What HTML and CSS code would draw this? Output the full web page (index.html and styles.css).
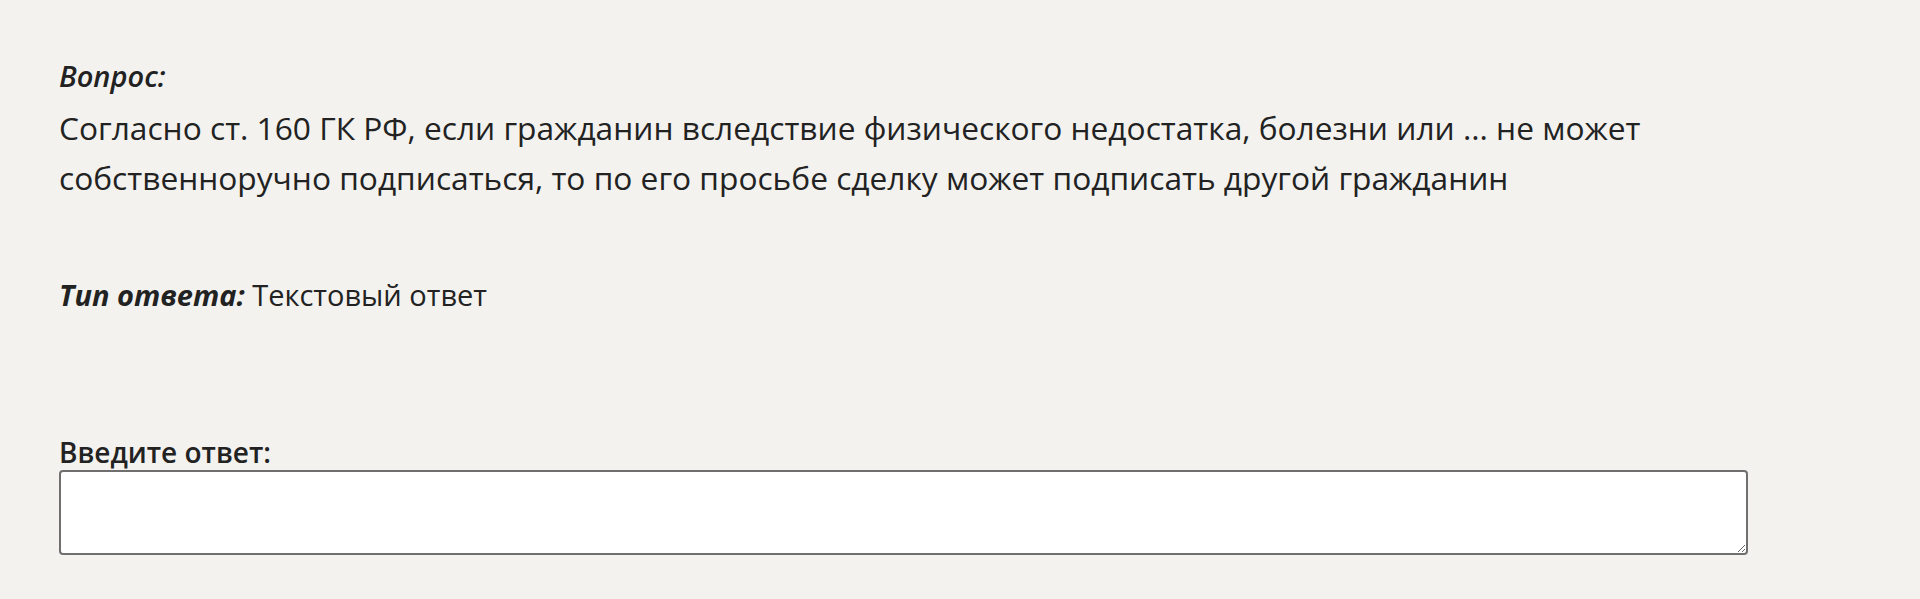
FILE: index.html
```html
<!DOCTYPE html>
<html lang="ru">
<head>
    <meta charset="UTF-8">
    <meta name="viewport" content="width=device-width, initial-scale=1.0">
    <title>Вопрос</title>
    <link rel="stylesheet" href="styles.css">
</head>
<body>
    <div class="container">
        <div class="question">
            <div class="question-label">Вопрос:</div>
            <div class="question-text">Согласно ст. 160 ГК РФ, если гражданин вследствие физического недостатка, болезни или ... не может собственноручно подписаться, то по его просьбе сделку может подписать другой гражданин</div>
        </div>
        <div class="answer-type">
            <span class="answer-type-label">Тип ответа:</span> Текстовый ответ
        </div>
        <div class="answer">
            <label for="answer">Введите ответ:</label>
            <textarea id="answer"></textarea>
        </div>
    </div>
</body>
</html>
```

FILE: styles.css
```css
body {
    font-family: "Open Sans", "Noto Sans", sans-serif;
    background-color: #f3f2ef;
    color: #222;
    margin: 0;
}

.container {
    padding: 56px 172px 0 59px;
}

.question-label {
    font-size: 29px;
    font-style: italic;
    font-weight: 600;
    line-height: 40px;
}

.question-text {
    margin-top: 7px;
    font-size: 31.7px;
    line-height: 50px;
}

.answer-type {
    margin-top: 72px;
    font-size: 29px;
    line-height: 40px;
}

.answer-type-label {
    font-style: italic;
    font-weight: 700;
}

.answer {
    margin-top: 120px;
}

label {
    display: block;
    font-size: 28px;
    font-weight: 600;
    line-height: 35px;
}

textarea {
    display: block;
    box-sizing: border-box;
    width: 100%;
    height: 85px;
    background: #fff;
    border: 2px solid #6f6f6f;
    border-radius: 4px;
    font-family: inherit;
    font-size: 20px;
}
```
